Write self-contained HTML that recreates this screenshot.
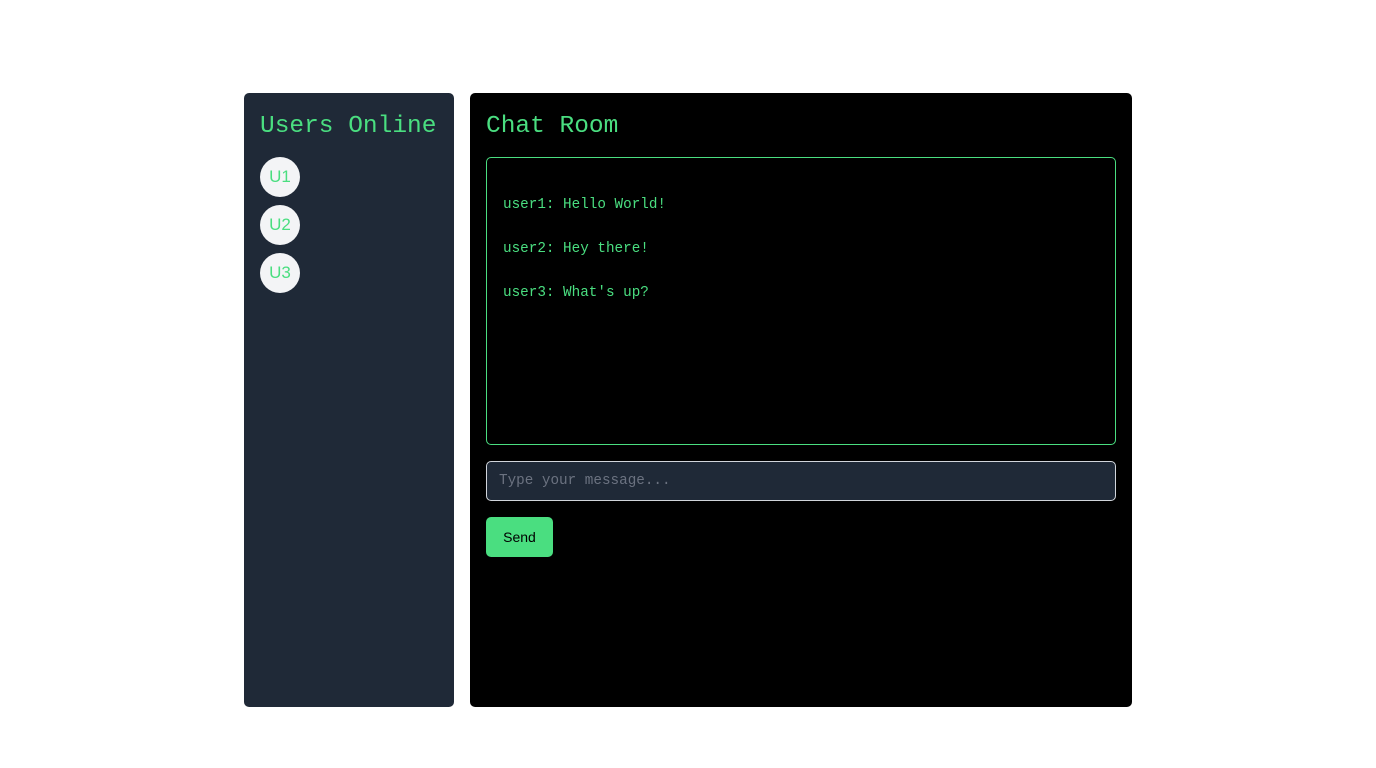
<!DOCTYPE html>
<html><head><meta charset="utf-8"><style>
body{margin:0;background:#fff;width:1376px;height:768px;position:relative;font-family:"Liberation Mono",monospace;}
.side{position:absolute;left:244px;top:93px;width:210px;height:614px;background:#1f2937;border-radius:5px;}
h2{font-weight:normal;font-size:24.5px;color:#4ade80;line-height:1;}
.u{position:absolute;left:16px;width:40px;height:40px;border-radius:50%;background:#f3f4f6;color:#4ade80;font-family:"Liberation Sans",sans-serif;font-size:17px;display:flex;align-items:center;justify-content:center;}
.main{position:absolute;left:470px;top:93px;width:662px;height:614px;background:#000;border-radius:5px;}
.box{position:absolute;left:16px;top:64px;width:628px;height:286px;border:1px solid #4ade80;border-radius:5px;}
.box p{position:absolute;left:16px;margin:0;color:#4ade80;font-size:14.3px;line-height:1;}
.inp{position:absolute;left:16px;top:368px;width:630px;height:40px;border:1px solid #d1d5db;border-radius:5px;background:#1f2937;box-sizing:border-box;}
.inp span{position:absolute;left:12px;top:12px;color:#6b7280;font-size:14.3px;line-height:1;}
.btn{position:absolute;left:16px;top:424px;width:67px;height:40px;background:#4ade80;border-radius:5px;color:#000;font-family:"Liberation Sans",sans-serif;font-size:14px;display:flex;align-items:center;justify-content:center;}
</style></head><body>
<div class="side">
<h2 style="position:absolute;left:16px;top:22px;margin:0">Users Online</h2>
<div class="u" style="top:64px">U1</div>
<div class="u" style="top:112px">U2</div>
<div class="u" style="top:160px">U3</div>
</div>
<div class="main">
<h2 style="position:absolute;left:16px;top:22px;margin:0">Chat Room</h2>
<div class="box">
<p style="top:40px">user1: Hello World!</p>
<p style="top:84px">user2: Hey there!</p>
<p style="top:128px">user3: What's up?</p>
</div>
<div class="inp"><span>Type your message...</span></div>
<div class="btn">Send</div>
</div>
</body></html>
